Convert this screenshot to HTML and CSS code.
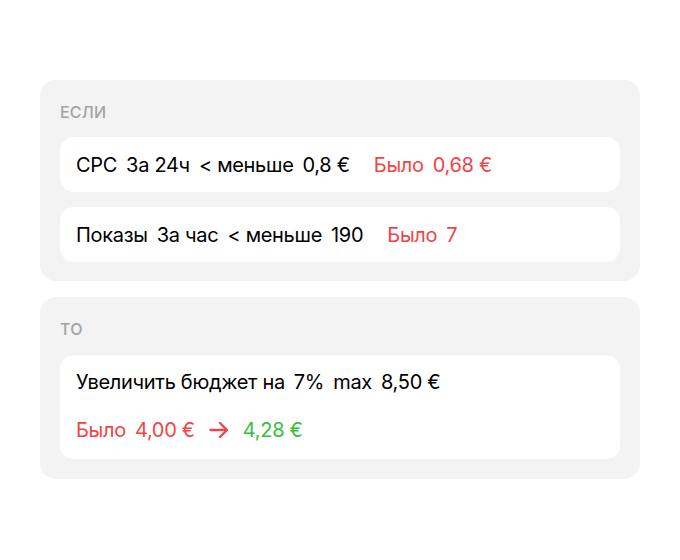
FILE: index.html
```html
<!DOCTYPE html>
<html lang="ru">
<head>
<meta charset="utf-8">
<title>Правило</title>
<link rel="stylesheet" href="styles.css">
</head>
<body>
  <main class="rule">
    <section class="block">
      <h2 class="block-title">ЕСЛИ</h2>
      <div class="card row">
        <span>CPC</span>
        <span>За 24ч</span>
        <span>&lt; меньше</span>
        <span>0,8 €</span>
        <span class="was">Было</span>
        <span class="red">0,68 €</span>
      </div>
      <div class="card row">
        <span>Показы</span>
        <span>За час</span>
        <span>&lt; меньше</span>
        <span>190</span>
        <span class="was">Было</span>
        <span class="red">7</span>
      </div>
    </section>
    <section class="block block-then">
      <h2 class="block-title">ТО</h2>
      <div class="card action">
        <div class="row">
          <span>Увеличить бюджет на</span>
          <span>7%</span>
          <span>max</span>
          <span>8,50 €</span>
        </div>
        <div class="row">
          <span class="red">Было</span>
          <span class="red">4,00 €</span>
          <svg class="arrow" width="20" height="18" viewBox="0 0 20 18" aria-hidden="true">
            <path d="M1.5 9H18M11 2L18 9L11 16" fill="none" stroke="#f04545" stroke-width="2.4" stroke-linecap="round" stroke-linejoin="round"/>
          </svg>
          <span class="green">4,28 €</span>
        </div>
      </div>
    </section>
  </main>
</body>
</html>
```
FILE: styles.css
```css
* { box-sizing: border-box; }

html, body {
  margin: 0;
  background: #ffffff;
}

body {
  font-family: Inter, "Noto Sans", sans-serif;
  color: #000000;
}

.rule {
  width: 600px;
  margin: 80px 0 0 40px;
  display: flex;
  flex-direction: column;
  gap: 16px;
}

.block {
  background: #f3f3f3;
  border-radius: 16px;
  padding: 22px 20px 19px;
  display: flex;
  flex-direction: column;
  gap: 15px;
}

.block-then {
  gap: 16px;
  padding-bottom: 20px;
}

.block-title {
  margin: 0;
  font-size: 16px;
  line-height: 20px;
  font-weight: 500;
  color: #a3a3a3;
  letter-spacing: 0.2px;
}

.card {
  background: #ffffff;
  border-radius: 14px;
}

.row {
  display: flex;
  align-items: center;
  gap: 9px;
  font-size: 20px;
  line-height: 24px;
  letter-spacing: -0.3px;
}

.card.row {
  height: 55px;
  padding: 0 16px;
}

.action {
  padding: 15px 16px 17px;
  display: flex;
  flex-direction: column;
  gap: 24px;
}

.was {
  margin-left: 15px;
  color: #f04545;
}

.red { color: #f04545; }
.green { color: #36c03a; }

.arrow {
  margin: 0 5px;
}
```
